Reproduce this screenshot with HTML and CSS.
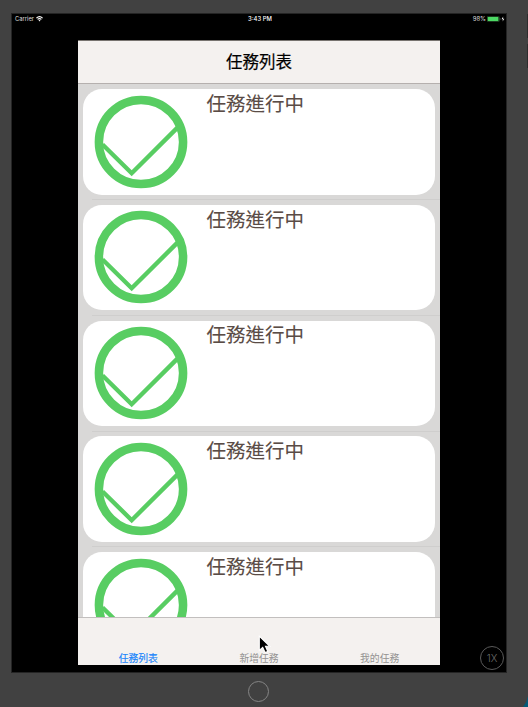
FILE: index.html
```html
<!DOCTYPE html>
<html lang="zh-Hant">
<head>
<meta charset="utf-8">
<title>任務列表</title>
<link rel="stylesheet" href="styles.css">
</head>
<body>
<svg class="defs" width="0" height="0" aria-hidden="true">
  <symbol id="check" viewBox="0 0 94 94">
    <circle cx="47" cy="47" r="42.1" fill="none" stroke="#58cd62" stroke-width="8.5"/>
    <path d="M8.5 49.5 37.7 78.2 84.7 31.4" fill="none" stroke="#58cd62" stroke-width="4.4"/>
  </symbol>
</svg>
<div class="device">
  <div class="screen">
    <header class="status">
      <div class="carrier">Carrier
        <svg class="wifi" width="7" height="6" viewBox="0 0 7 6"><path d="M.4 2.1Q3.5-.8 6.6 2.1M1.6 3.4Q3.5 1.8 5.4 3.4" fill="none" stroke="#fff" stroke-width="1.1"/><path d="M2.5 4.3Q3.5 3.6 4.5 4.3L3.5 5.5Z" fill="#fff"/></svg>
      </div>
      <div class="time">3:43 PM</div>
      <div class="power">98%
        <svg width="18" height="6" viewBox="0 0 18 6"><rect x=".2" y=".4" width="12.2" height="5.2" rx="1" fill="none" stroke="#346d3b" stroke-width=".6"/><rect x=".7" y="1" width="10.8" height="4" rx=".5" fill="#4cd964"/><path d="M13.2 2.2v1.6" stroke="#666" stroke-width=".7"/><path d="M16.2.4 14.6 3.3H16L15.6 5.6 17.3 2.7H16Z" fill="#fff"/></svg>
      </div>
    </header>
    <main class="app">
      <h1 class="nav">任務列表</h1>
      <div class="list">
        <div class="row"><div class="card"><svg class="check"><use href="#check"/></svg><span class="label">任務進行中</span></div></div>
        <div class="row"><div class="card"><svg class="check"><use href="#check"/></svg><span class="label">任務進行中</span></div></div>
        <div class="row"><div class="card"><svg class="check"><use href="#check"/></svg><span class="label">任務進行中</span></div></div>
        <div class="row"><div class="card"><svg class="check"><use href="#check"/></svg><span class="label">任務進行中</span></div></div>
        <div class="row"><div class="card"><svg class="check"><use href="#check"/></svg><span class="label">任務進行中</span></div></div>
      </div>
      <nav class="tabs">
        <span class="tab active">任務列表</span>
        <span class="tab">新增任務</span>
        <span class="tab">我的任務</span>
      </nav>
    </main>
    <div class="scale">1X</div>
  </div>
  <div class="home"></div>
  <svg class="cursor" width="14" height="20" viewBox="0 0 14 20"><path d="M1.3 1.2V15.4L4.7 12.3 7.1 17.6 9.8 16.4 7.5 11.3H11.8Z" fill="#000" stroke="#fff" stroke-width="1.1"/></svg>
  <svg class="corner" width="5" height="11" viewBox="0 0 5 11"><path d="M5 0Q4 6 0 11H5Z" fill="#045a78"/></svg>
  <i class="button upper"></i>
  <i class="button lower"></i>
</div>
</body>
</html>
```
FILE: styles.css
```css
* { box-sizing: border-box; }

body {
  margin: 0;
  font-family: Inter, "Noto Sans CJK TC", sans-serif;
}

.defs { position: absolute; }

.device {
  position: relative;
  width: 528px;
  height: 707px;
  padding: 13px 21px 0 11px;
  overflow: hidden;
  background: #414141;
}

.screen {
  position: relative;
  height: 660px;
  border: 1px solid #242424;
  background: #000;
}

.status {
  display: grid;
  grid-template-columns: 1fr auto 1fr;
  align-items: center;
  height: 9px;
  padding: 0 1px 0 3px;
  color: #ddd;
  font-size: 6px;
  line-height: 9px;
}

.carrier,
.power {
  display: flex;
  align-items: center;
  gap: 2px;
}

.carrier { font-size: 5.8px; }
.time { color: #fff; font-weight: 500; font-size: 5.9px; }
.power { justify-content: flex-end; gap: 1px; }

.app {
  display: flex;
  flex-direction: column;
  width: 362px;
  height: 624px;
  margin: 18px 0 0 66px;
  overflow: hidden;
  background: #d9d8d7;
  box-shadow: 0 -1px #77736f;
}

.nav {
  flex: none;
  height: 43px;
  margin: 0;
  border-bottom: 1px solid #b5b0ae;
  background: #f4f1ef;
  color: #000;
  font: 400 16.5px/41px "Noto Sans CJK TC", sans-serif;
  text-align: center;
  -webkit-text-stroke: .2px #000;
}

.list {
  flex: 1;
  min-height: 0;
  overflow: hidden;
}

.row {
  height: 115.75px;
  padding: 5px 5px 0;
  background: linear-gradient(#cfcecd, #cfcecd) 14px 115px / 348px 1px no-repeat;
}

.card {
  display: flex;
  height: 105.5px;
  padding: 5.6px 0 0 10.8px;
  border-radius: 19px;
  background: #fff;
}

.check {
  flex: none;
  width: 94px;
  height: 94px;
}

.label {
  margin: -5.8px 0 0 18.7px;
  color: #5a4c46;
  font: 400 19.5px/28px "Noto Sans CJK TC", sans-serif;
  -webkit-text-stroke: .1px #5a4c46;
}

.tabs {
  display: grid;
  grid-template-columns: repeat(3, 1fr);
  align-items: end;
  flex: none;
  height: 48px;
  border-top: 1px solid #c2bfbe;
  background: #f4f1ef;
}

.tab {
  color: #939191;
  font: 400 9.8px/14px "Noto Sans CJK TC", sans-serif;
  text-align: center;
}

.active { color: #1784fb; -webkit-text-stroke: .15px; }

.scale {
  position: absolute;
  right: 2px;
  bottom: 2px;
  width: 24px;
  height: 24px;
  border: 1px solid #5a5a5a;
  border-radius: 50%;
  color: #6c6c6c;
  font: 300 10px/22px Inter, sans-serif;
  text-align: center;
}

.home {
  width: 21px;
  height: 21px;
  margin: 8px 0 0 237px;
  border: 1px solid #858585;
  border-radius: 50%;
}

.cursor {
  position: absolute;
  left: 258px;
  top: 635px;
}

.corner {
  position: absolute;
  right: 0;
  bottom: 0;
}

.button {
  position: absolute;
  right: 0;
  width: 1px;
  height: 24px;
  background: #2d2d2d;
}

.upper { top: 14px; }
.lower { top: 44px; }
```
